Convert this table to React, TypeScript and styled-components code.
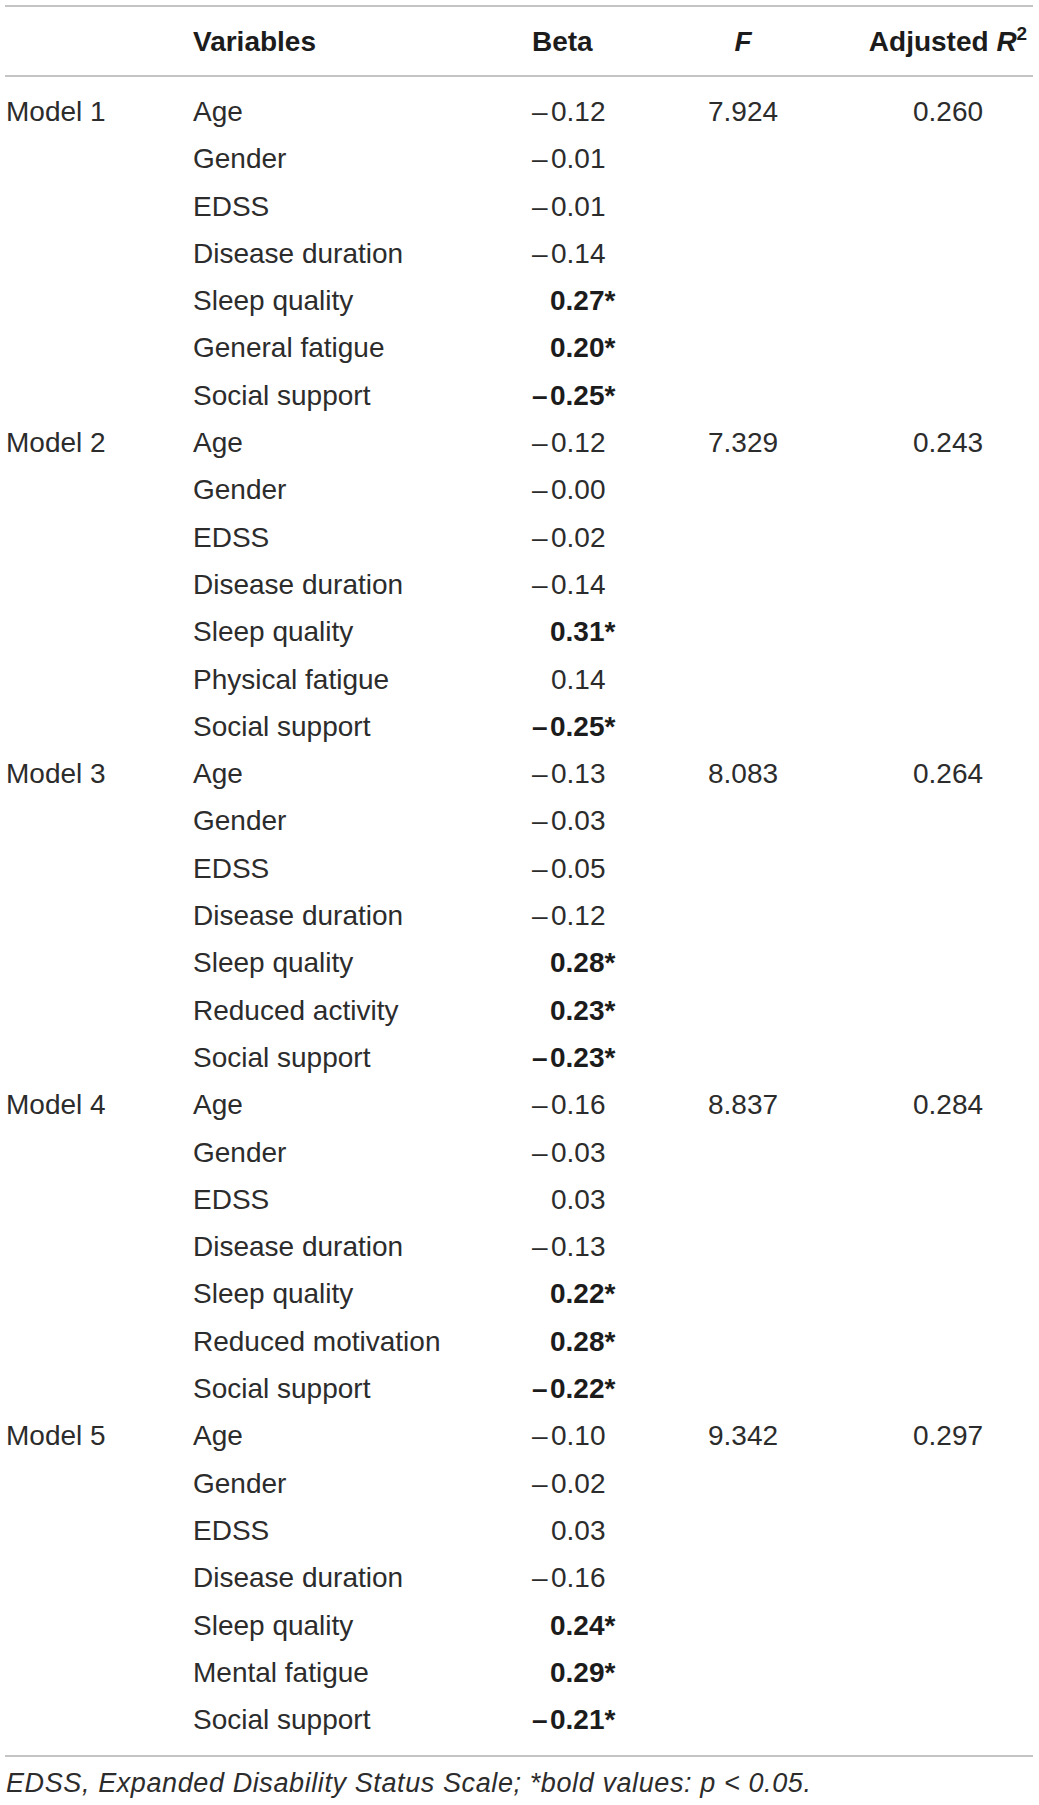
import React from "react";
import styled, { createGlobalStyle } from "styled-components";

const GlobalStyle = createGlobalStyle`
  html, body {
    margin: 0;
    padding: 0;
    background: #ffffff;
  }
  body {
    font-family: "Liberation Sans", Arial, sans-serif;
    color: #2c2c2c;
  }
`;

const Table = styled.div`
  width: 1028px;
  margin-left: 5px;
  padding-top: 5px;
`;

const columns = "188px 339px 128px 166px 207px";

const HeadRow = styled.div`
  display: grid;
  grid-template-columns: ${columns};
  height: 72px;
  line-height: 70px;
  border-top: 2px solid #c4c4c4;
  border-bottom: 2px solid #c4c4c4;
  font-size: 28px;
  font-weight: 700;
  color: #1c1c1c;
  box-sizing: border-box;
`;

const HeadCell = styled.div<{ $align?: "left" | "center" }>`
  text-align: ${({ $align }) => $align || "left"};
  white-space: nowrap;
`;

const Body = styled.div`
  padding: 11px 0 12px;
  border-bottom: 2px solid #c4c4c4;
`;

const Row = styled.div`
  display: grid;
  grid-template-columns: ${columns};
  height: 47.3px;
  line-height: 47.3px;
  font-size: 28px;
  white-space: nowrap;
`;

const ModelCell = styled.div`
  padding-left: 1px;
`;

const VarCell = styled.div``;

const BetaCell = styled.div<{ $bold?: boolean }>`
  font-weight: ${({ $bold }) => ($bold ? 700 : 400)};
  color: ${({ $bold }) => ($bold ? "#1c1c1c" : "inherit")};
`;

const Sign = styled.span<{ $bold?: boolean }>`
  display: inline-block;
  width: ${({ $bold }) => ($bold ? 18 : 19)}px;
`;

const CenterCell = styled.div`
  text-align: center;
`;

const AdjCell = styled.div`
  text-align: center;
  padding-left: 40px;
  padding-right: 3px;
`;

const Italic = styled.i`
  font-style: italic;
`;

const Sup = styled.sup`
  font-size: 19px;
  line-height: 0;
  vertical-align: 11px;
`;

const Note = styled.div`
  padding: 11px 0 0 1px;
  font-size: 27px;
  letter-spacing: 0.6px;
  font-style: italic;
  color: #2c2c2c;
  white-space: nowrap;
`;

type Entry = [string, string, boolean?];

interface Model {
  name: string;
  f: string;
  r2: string;
  rows: Entry[];
}

const models: Model[] = [
  {
    name: "Model 1",
    f: "7.924",
    r2: "0.260",
    rows: [
      ["Age", "−0.12"],
      ["Gender", "−0.01"],
      ["EDSS", "−0.01"],
      ["Disease duration", "−0.14"],
      ["Sleep quality", "0.27*", true],
      ["General fatigue", "0.20*", true],
      ["Social support", "−0.25*", true],
    ],
  },
  {
    name: "Model 2",
    f: "7.329",
    r2: "0.243",
    rows: [
      ["Age", "−0.12"],
      ["Gender", "−0.00"],
      ["EDSS", "−0.02"],
      ["Disease duration", "−0.14"],
      ["Sleep quality", "0.31*", true],
      ["Physical fatigue", "0.14"],
      ["Social support", "−0.25*", true],
    ],
  },
  {
    name: "Model 3",
    f: "8.083",
    r2: "0.264",
    rows: [
      ["Age", "−0.13"],
      ["Gender", "−0.03"],
      ["EDSS", "−0.05"],
      ["Disease duration", "−0.12"],
      ["Sleep quality", "0.28*", true],
      ["Reduced activity", "0.23*", true],
      ["Social support", "−0.23*", true],
    ],
  },
  {
    name: "Model 4",
    f: "8.837",
    r2: "0.284",
    rows: [
      ["Age", "−0.16"],
      ["Gender", "−0.03"],
      ["EDSS", "0.03"],
      ["Disease duration", "−0.13"],
      ["Sleep quality", "0.22*", true],
      ["Reduced motivation", "0.28*", true],
      ["Social support", "−0.22*", true],
    ],
  },
  {
    name: "Model 5",
    f: "9.342",
    r2: "0.297",
    rows: [
      ["Age", "−0.10"],
      ["Gender", "−0.02"],
      ["EDSS", "0.03"],
      ["Disease duration", "−0.16"],
      ["Sleep quality", "0.24*", true],
      ["Mental fatigue", "0.29*", true],
      ["Social support", "−0.21*", true],
    ],
  },
];

const Beta = ({ value, bold }: { value: string; bold?: boolean }) => {
  const negative = value.startsWith("−");
  return (
    <BetaCell $bold={bold}>
      <Sign $bold={bold}>{negative ? "–" : ""}</Sign>
      {negative ? value.slice(1) : value}
    </BetaCell>
  );
};

const App = () => {
  return (
    <>
      <GlobalStyle />
      <Table>
        <HeadRow>
          <HeadCell />
          <HeadCell>Variables</HeadCell>
          <HeadCell>Beta</HeadCell>
          <HeadCell $align="center">
            <Italic>F</Italic>
          </HeadCell>
          <AdjCell>
            Adjusted <Italic>R</Italic>
            <Sup>2</Sup>
          </AdjCell>
        </HeadRow>
        <Body>
          {models.map((model) =>
            model.rows.map(([variable, beta, bold], i) => (
              <Row key={model.name + variable}>
                <ModelCell>{i === 0 ? model.name : ""}</ModelCell>
                <VarCell>{variable}</VarCell>
                <Beta value={beta} bold={bold} />
                <CenterCell>{i === 0 ? model.f : ""}</CenterCell>
                <AdjCell>{i === 0 ? model.r2 : ""}</AdjCell>
              </Row>
            ))
          )}
        </Body>
        <Note>
          EDSS, Expanded Disability Status Scale; *bold values: p &lt; 0.05.
        </Note>
      </Table>
    </>
  );
};

export default App;
